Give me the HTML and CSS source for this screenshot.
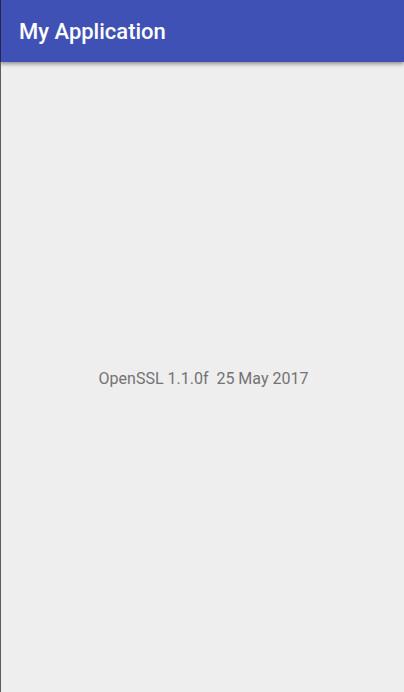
FILE: index.html
```html
<!DOCTYPE html>
<html lang="en">
<head>
<meta charset="utf-8">
<meta name="viewport" content="width=device-width, initial-scale=1">
<title>My Application</title>
<link rel="stylesheet" href="styles.css">
</head>
<body>
<div class="screen">
  <header class="app-bar"><h1 class="app-title">My Application</h1></header>
  <main class="content"><p class="version">OpenSSL 1.1.0f  25 May 2017</p></main>
</div>
</body>
</html>
```
FILE: styles.css
```css
* { box-sizing: border-box; }

body {
  margin: 0;
  font-family: Roboto, "Liberation Sans", sans-serif;
  background: #eeeeee;
}

.screen {
  display: flex;
  flex-direction: column;
  min-height: 100vh;
}

.app-bar {
  padding: 17px 18px 15px;
  color: #ffffff;
  background: #3f51b5;
  border-left: 1px solid #24294b;
  box-shadow: 0 2px 4px rgba(0, 0, 0, 0.4);
}

.app-title {
  margin: 0;
  font-size: 22px;
  line-height: 30px;
  font-weight: 500;
}

.content {
  flex: 1;
  display: flex;
  align-items: center;
  justify-content: center;
  padding: 4px 0 0 2px;
  border-left: 1px solid #5c5c5c;
}

.version {
  margin: 0;
  color: #737373;
  font-size: 16px;
  line-height: 20px;
  white-space: pre;
}
```
